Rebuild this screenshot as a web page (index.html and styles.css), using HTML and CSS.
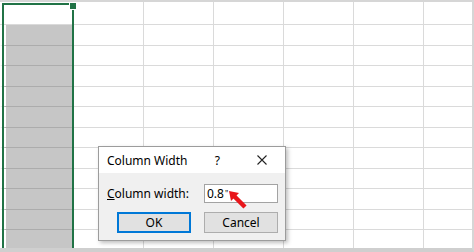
FILE: index.html
```html
<!DOCTYPE html>
<html>
<head>
    <meta charset="utf-8">
    <title>Column Width</title>
    <link rel="stylesheet" href="styles.css">
</head>
<body>
    <div class="sheet">
        <div class="row first">
            <div class="cell"></div><div class="cell"></div><div class="cell"></div><div class="cell"></div><div class="cell"></div><div class="cell"></div><div class="cell"></div>
        </div>
        <div class="row"><div class="cell sel"></div><div class="cell"></div><div class="cell"></div><div class="cell"></div><div class="cell"></div><div class="cell"></div><div class="cell"></div></div>
        <div class="row"><div class="cell sel"></div><div class="cell"></div><div class="cell"></div><div class="cell"></div><div class="cell"></div><div class="cell"></div><div class="cell"></div></div>
        <div class="row"><div class="cell sel"></div><div class="cell"></div><div class="cell"></div><div class="cell"></div><div class="cell"></div><div class="cell"></div><div class="cell"></div></div>
        <div class="row"><div class="cell sel"></div><div class="cell"></div><div class="cell"></div><div class="cell"></div><div class="cell"></div><div class="cell"></div><div class="cell"></div></div>
        <div class="row"><div class="cell sel"></div><div class="cell"></div><div class="cell"></div><div class="cell"></div><div class="cell"></div><div class="cell"></div><div class="cell"></div></div>
        <div class="row"><div class="cell sel"></div><div class="cell"></div><div class="cell"></div><div class="cell"></div><div class="cell"></div><div class="cell"></div><div class="cell"></div></div>
        <div class="row"><div class="cell sel"></div><div class="cell"></div><div class="cell"></div><div class="cell"></div><div class="cell"></div><div class="cell"></div><div class="cell"></div></div>
        <div class="row"><div class="cell sel"></div><div class="cell"></div><div class="cell"></div><div class="cell"></div><div class="cell"></div><div class="cell"></div><div class="cell"></div></div>
        <div class="row"><div class="cell sel"></div><div class="cell"></div><div class="cell"></div><div class="cell"></div><div class="cell"></div><div class="cell"></div><div class="cell"></div></div>
        <div class="row"><div class="cell sel"></div><div class="cell"></div><div class="cell"></div><div class="cell"></div><div class="cell"></div><div class="cell"></div><div class="cell"></div></div>
        <div class="row"><div class="cell sel"></div><div class="cell"></div><div class="cell"></div><div class="cell"></div><div class="cell"></div><div class="cell"></div><div class="cell"></div></div>

        <!-- selected column outline -->
        <div class="selection"><span class="handle"></span></div>

        <div class="dialog">
            <div class="dialog-title">
                <span class="title-text">Column Width</span>
                <span class="help">?</span>
                <svg class="close" width="10" height="10" viewBox="0 0 10 10">
                    <path d="M0.5 0.5 L9.5 9.5 M9.5 0.5 L0.5 9.5" stroke="#222" stroke-width="1.1" fill="none"/>
                </svg>
            </div>
            <div class="dialog-body">
                <div class="field">
                    <label><u>C</u>olumn width:</label>
                    <div class="input">0.8<span class="inch">"</span></div>
                </div>
                <div class="buttons">
                    <button class="btn default">OK</button>
                    <button class="btn">Cancel</button>
                </div>
            </div>
        </div>

        <svg class="arrow" width="24" height="24" viewBox="0 0 24 24">
            <line x1="8" y1="8" x2="19" y2="19" stroke="#e8161b" stroke-width="4.5"/>
            <polygon points="3,3 13,5 5,13" fill="#e8161b"/>
        </svg>
    </div>
</body>
</html>
```

FILE: styles.css
```css
body {
    margin: 0;
    background: #fff;
    font-family: "Noto Sans", "Open Sans", sans-serif;
}
.sheet {
    position: relative;
    width: 474px;
    height: 252px;
    box-sizing: border-box;
    border-top: 2px solid #d6d6d6;
    border-right: 2px solid #d6d6d6;
    border-bottom: 4px solid #cfcfcf;
    overflow: hidden;
    display: flex;
    flex-direction: column;
}
.row {
    display: grid;
    grid-template-columns: 74px repeat(5, 70px) 1fr;
    height: 20.5px;
    flex-shrink: 0;
}
.row.first {
    height: 23px;
}
.cell {
    box-sizing: border-box;
    border-right: 1px solid #dadada;
    border-bottom: 1px solid #dadada;
}
.cell:last-child {
    border-right: none;
}
.cell.sel {
    background: #c6c6c6;
    border-left: 6px solid #fff;
    border-bottom-color: #acacac;
}
.selection {
    position: absolute;
    left: 2px;
    top: 1px;
    width: 72px;
    height: 270px;
    box-sizing: border-box;
    border: 2px solid #217346;
}
.handle {
    position: absolute;
    left: 66px;
    top: -2px;
    width: 6px;
    height: 6px;
    background: #217346;
    outline: 1px solid #fff;
}
.dialog {
    position: absolute;
    left: 98px;
    top: 144px;
    width: 188px;
    height: 95px;
    box-sizing: border-box;
    border: 1px solid #9c9c9c;
    background: #f0f0f0;
    box-shadow: 2px 2px 4px rgba(0,0,0,0.25);
    font-size: 12px;
    color: #000;
}
.dialog-title {
    height: 26px;
    background: #fff;
    display: flex;
    align-items: center;
    padding: 0 18px 0 8px;
}
.title-text {
    flex: 1;
}
.help {
    margin-right: 37px;
}
.close {
    display: block;
}
.dialog-body {
    padding: 11px 7px 7px 8px;
}
.field {
    display: flex;
    align-items: center;
    justify-content: space-between;
    height: 19px;
}
.input {
    width: 74px;
    height: 19px;
    box-sizing: border-box;
    border: 1px solid #a3a3a3;
    background: #fff;
    padding-left: 2px;
    line-height: 17px;
}
.inch {
    font-size: 8px;
    vertical-align: top;
    margin-left: 1px;
}
.buttons {
    display: flex;
    justify-content: flex-end;
    gap: 13px;
    margin-top: 9px;
}
.btn {
    width: 74px;
    height: 21px;
    box-sizing: border-box;
    border: 1px solid #adadad;
    background: #e1e1e1;
    font-family: inherit;
    font-size: 12px;
    color: #000;
    padding: 0;
}
.btn.default {
    border-color: #0078d7;
    box-shadow: inset 0 0 0 1px #0078d7;
}
.arrow {
    position: absolute;
    left: 226px;
    top: 186px;
}
```
